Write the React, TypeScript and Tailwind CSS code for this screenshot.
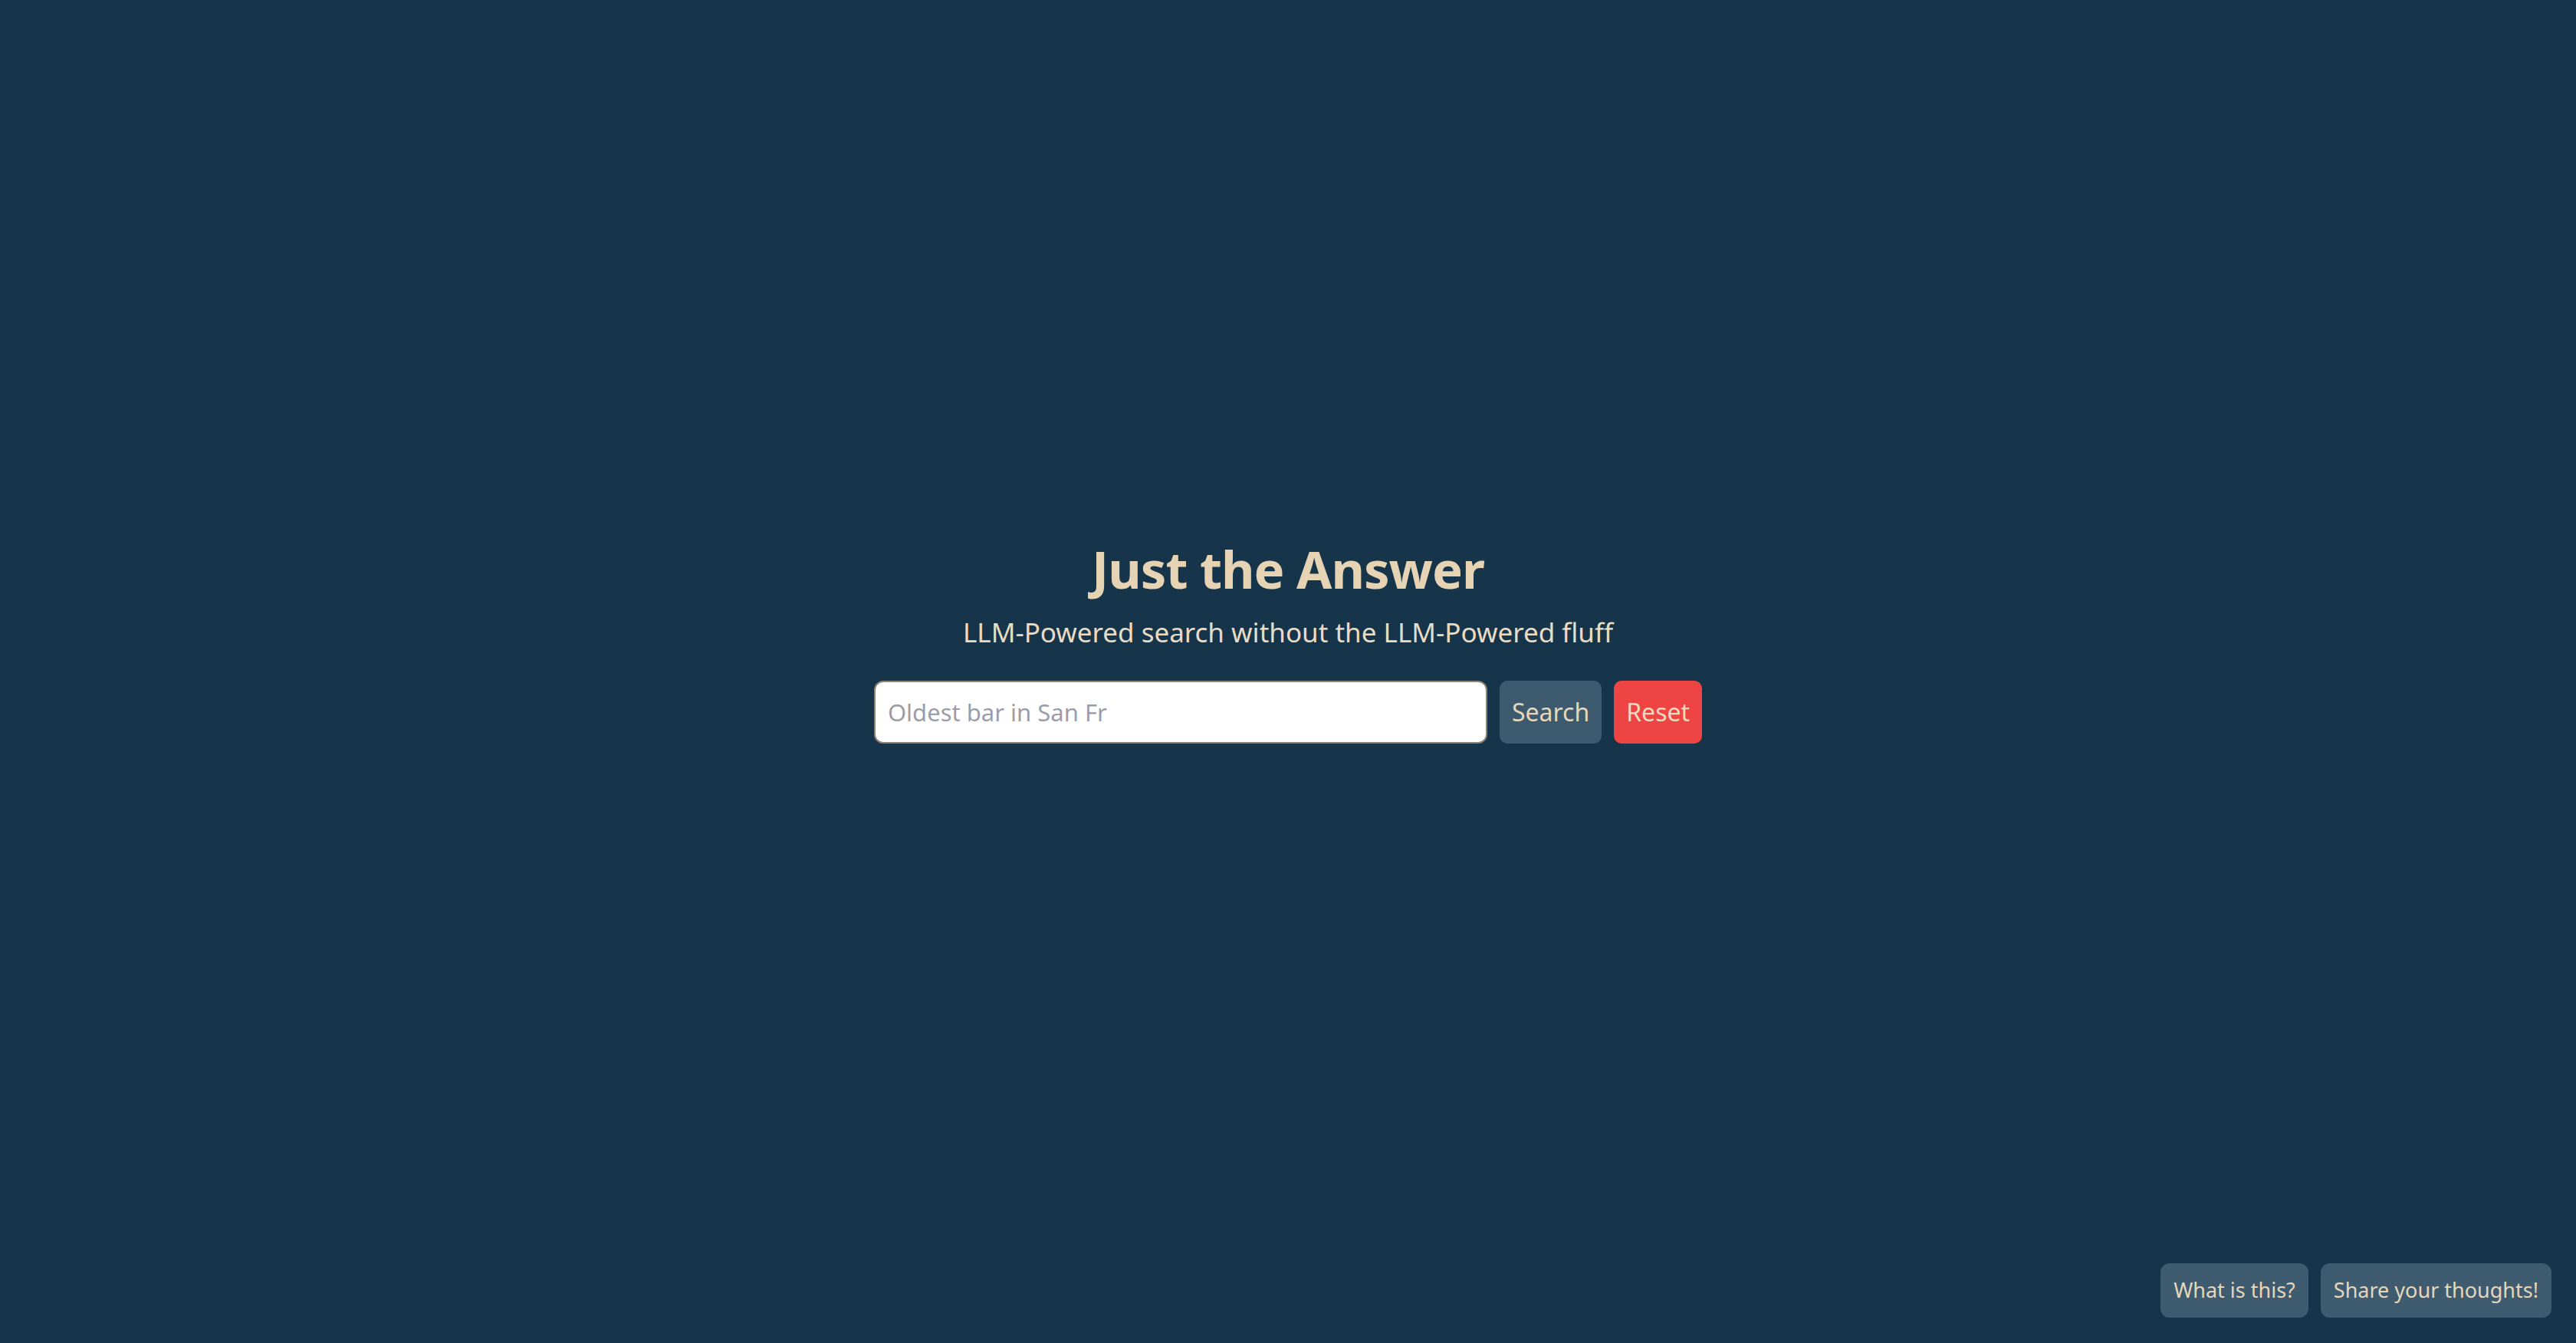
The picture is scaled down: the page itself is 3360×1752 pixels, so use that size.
export default function App() {
  const font = { fontFamily: '"Noto Sans", "Open Sans", sans-serif' };
  return (
    <div
      className="relative min-h-screen w-full bg-[#16354a] text-[#e6d6bb]"
      style={font}
    >
      <main className="flex flex-col items-center pt-[702px]">
        <h1 className="text-[67px] font-bold leading-[80px] tracking-[-1px] text-[#e6d3b3]">
          Just the Answer
        </h1>
        <p className="mt-[15px] text-[35px] leading-[56px] text-[#eadcc4]">
          LLM-Powered search without the LLM-Powered fluff
        </p>
        <form
          className="mt-[35px] flex items-center gap-[16px]"
          onSubmit={(e) => e.preventDefault()}
        >
          <input
            type="text"
            placeholder="Oldest bar in San Fr"
            className="h-[82px] w-[800px] rounded-[12px] border-2 border-[#8c8374] bg-white px-[16px] text-[31px] text-gray-800 placeholder:text-[#9d9da8] outline-none"
          />
          <button
            type="submit"
            className="h-[82px] rounded-[10px] bg-[#3d5a6e] px-[16px] text-[32px] text-[#e6d6bb]"
          >
            Search
          </button>
          <button
            type="button"
            className="h-[82px] rounded-[10px] bg-[#ef4444] px-[16px] text-[32px] text-[#ecd9c0]"
          >
            Reset
          </button>
        </form>
      </main>
      <div className="absolute bottom-[33px] right-[32px] flex gap-[16px]">
        <button className="h-[71px] rounded-[12px] bg-[#3e5b6f] px-[17px] text-[27px] text-[#e6d6bb]">
          What is this?
        </button>
        <button className="h-[71px] rounded-[12px] bg-[#3e5b6f] px-[17px] text-[27px] text-[#e6d6bb]">
          Share your thoughts!
        </button>
      </div>
    </div>
  );
}
